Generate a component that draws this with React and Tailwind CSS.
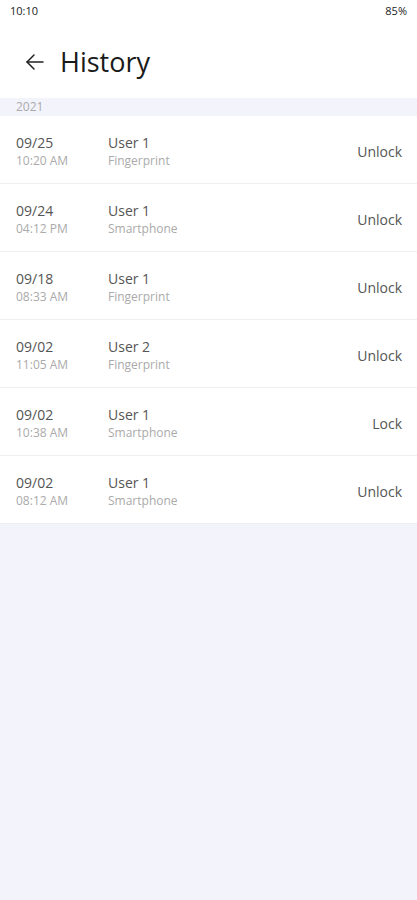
import React from 'react';

const rows = [
  { date: '09/25', time: '10:20 AM', user: 'User 1', method: 'Fingerprint', action: 'Unlock' },
  { date: '09/24', time: '04:12 PM', user: 'User 1', method: 'Smartphone', action: 'Unlock' },
  { date: '09/18', time: '08:33 AM', user: 'User 1', method: 'Fingerprint', action: 'Unlock' },
  { date: '09/02', time: '11:05 AM', user: 'User 2', method: 'Fingerprint', action: 'Unlock' },
  { date: '09/02', time: '10:38 AM', user: 'User 1', method: 'Smartphone', action: 'Lock' },
  { date: '09/02', time: '08:12 AM', user: 'User 1', method: 'Smartphone', action: 'Unlock' },
];

const App = () => {
  return (
    <div className="min-h-[900px] bg-[#f3f3fb] font-['Open_Sans',sans-serif]">
      {/* Status bar + header */}
      <div className="bg-white">
        <div className="flex h-[22px] items-center justify-between px-[10px] text-[11px] text-[#222]">
          <span>10:10</span>
          <span>85%</span>
        </div>
        <div className="flex h-[76px] items-center pl-[23px] pt-[4px]">
          <svg width="24" height="24" viewBox="0 0 24 24" fill="none" stroke="#222" strokeWidth="1.5" strokeLinecap="round" strokeLinejoin="round">
            <path d="M20 12H4" />
            <path d="M11 5l-7 7 7 7" />
          </svg>
          <h1 className="ml-[13px] text-[27px] font-medium text-[#1a1a1a]">History</h1>
        </div>
      </div>

      {/* Year section */}
      <div className="flex h-[18px] items-center px-4 text-[12px] text-[#aaa]">2021</div>

      {/* List */}
      <div className="bg-white">
        {rows.map((r, i) => (
          <div
            key={i}
            className="flex h-[68px] items-center border-b border-[#efeff3] pr-[15px] pt-[4px]"
          >
            <div className="w-[108px] pl-4">
              <div className="text-[14px] leading-[18px] text-[#555]">{r.date}</div>
              <div className="text-[12px] leading-[18px] text-[#aaa]">{r.time}</div>
            </div>
            <div className="flex-1">
              <div className="text-[14px] leading-[18px] text-[#555]">{r.user}</div>
              <div className="text-[12px] leading-[18px] text-[#aaa]">{r.method}</div>
            </div>
            <div className="text-[14px] text-[#555]">{r.action}</div>
          </div>
        ))}
      </div>
    </div>
  );
};

export default App;
